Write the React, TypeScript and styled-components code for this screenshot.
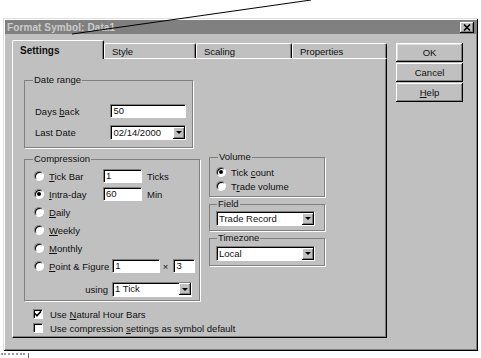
import styled, { createGlobalStyle } from "styled-components";

const GlobalStyle = createGlobalStyle`
  html, body {
    margin: 0;
    padding: 0;
    background: #fff;
  }
  body {
    font-family: "Liberation Sans", Arial, sans-serif;
    font-size: 9.5px;
    color: #111;
  }
  * {
    box-sizing: border-box;
  }
`;

const Page = styled.div`
  position: relative;
  width: 481px;
  height: 358px;
  padding: 18px 0 0 3px;
  overflow: hidden;
`;

const Scribble = styled.svg`
  position: absolute;
  left: 0;
  top: 0;
  pointer-events: none;
`;

const Window = styled.div`
  width: 475px;
  height: 333px;
  padding: 2px;
  background: #c0c0c0;
  box-shadow: inset 1px 1px #dfdfdf, inset -1px -1px #000, inset 2px 2px #fff,
    inset -2px -2px #808080;
  display: flex;
  flex-direction: column;
`;

const TitleBar = styled.div`
  height: 14px;
  background: #808080;
  display: flex;
  align-items: center;
  justify-content: space-between;
  padding: 0 2px 0 2px;
`;

const Title = styled.span`
  font-size: 10px;
  font-weight: bold;
  color: #cbcbcb;
  letter-spacing: 0.1px;
`;

const CloseButton = styled.div`
  width: 14px;
  height: 11px;
  background: #c0c0c0;
  box-shadow: inset -1px -1px #000, inset 1px 1px #fff, inset -2px -2px #808080;
  display: flex;
  align-items: center;
  justify-content: center;
`;

const Body = styled.div`
  display: flex;
  padding: 6px 0 0 7px;
`;

const TabArea = styled.div`
  width: 375px;
  display: flex;
  flex-direction: column;
`;

const TabStrip = styled.div`
  display: flex;
  align-items: flex-end;
  height: 18px;
`;

const Tab = styled.div<{ $w: number; $active?: boolean }>`
  position: relative;
  z-index: ${(p) => (p.$active ? 1 : 0)};
  width: ${(p) => p.$w}px;
  height: ${(p) => (p.$active ? 19 : 15)}px;
  margin-bottom: ${(p) => (p.$active ? -1 : 0)}px;
  padding: 0 0 0 7px;
  display: flex;
  align-items: center;
  background: #c0c0c0;
  border-top: 1px solid #fff;
  border-left: 1px solid #fff;
  border-right: 1px solid #000;
  border-radius: 2px 2px 0 0;
  box-shadow: inset -1px 0 #808080;
  font-size: ${(p) => (p.$active ? 10 : 9.5)}px;
  font-weight: ${(p) => (p.$active ? "bold" : "normal")};
`;

const Panel = styled.div`
  height: 280px;
  border-top: 1px solid #fff;
  border-left: 1px solid #fff;
  border-right: 1px solid #000;
  border-bottom: 1px solid #000;
  box-shadow: inset -1px -1px #808080;
  padding: 15px 0 0 11px;
`;

const GroupsRow = styled.div`
  display: flex;
  align-items: flex-start;
`;

const Column = styled.div<{ $offset?: number; $gap?: number }>`
  display: flex;
  flex-direction: column;
  gap: ${(p) => p.$gap ?? 0}px;
  margin-top: ${(p) => p.$offset ?? 0}px;
  margin-left: ${(p) => (p.$offset ? 9 : 0)}px;
`;

const Group = styled.fieldset<{ $w: number; $pad: string }>`
  margin: 0;
  min-width: 0;
  width: ${(p) => p.$w}px;
  border: 1px solid #808080;
  box-shadow: 1px 1px 0 #fff;
  padding: ${(p) => p.$pad};
  display: flex;
  flex-direction: column;
`;

const Legend = styled.legend<{ $indent: number }>`
  margin-left: ${(p) => p.$indent}px;
  padding: 0 1px;
  line-height: 12px;
  font-size: 9.5px;
`;

const Row = styled.div<{ $h?: number; $gap?: number }>`
  display: flex;
  align-items: center;
  height: ${(p) => p.$h ?? 18}px;
  gap: ${(p) => p.$gap ?? 0}px;
`;

const FieldLabel = styled.span<{ $w?: number; $right?: boolean }>`
  width: ${(p) => (p.$w ? `${p.$w}px` : "auto")};
  text-align: ${(p) => (p.$right ? "right" : "left")};
  white-space: nowrap;
`;

const Edit = styled.div<{ $w: number; $h?: number }>`
  width: ${(p) => p.$w}px;
  height: ${(p) => p.$h ?? 14}px;
  background: #fff;
  border: 1px solid;
  border-color: #808080 #fff #fff #808080;
  box-shadow: inset 1px 1px #000;
  padding: 0 0 0 2px;
  display: flex;
  align-items: center;
  justify-content: space-between;
  font-size: 9.5px;
  line-height: 12px;
  white-space: nowrap;
`;

const DropButton = styled.div`
  width: 12px;
  height: 12px;
  background: #c0c0c0;
  box-shadow: inset -1px -1px #000, inset 1px 1px #fff, inset -2px -2px #808080;
  display: flex;
  align-items: center;
  justify-content: center;
`;

const Arrow = styled.span`
  width: 0;
  height: 0;
  border-left: 3px solid transparent;
  border-right: 3px solid transparent;
  border-top: 3px solid #000;
`;

const RadioDot = styled.span<{ $checked?: boolean }>`
  flex: none;
  width: 10px;
  height: 10px;
  border-radius: 50%;
  background: #fff;
  border: 1px solid;
  border-color: #808080 #fff #fff #808080;
  box-shadow: inset 1px 1px #000;
  display: flex;
  align-items: center;
  justify-content: center;
  &::after {
    content: "";
    width: 4px;
    height: 4px;
    border-radius: 50%;
    background: ${(p) => (p.$checked ? "#000" : "transparent")};
  }
`;

const CheckBox = styled.span`
  flex: none;
  width: 10px;
  height: 10px;
  background: #fff;
  border: 1px solid;
  border-color: #808080 #fff #fff #808080;
  box-shadow: inset 1px 1px #000;
  display: flex;
  align-items: center;
  justify-content: center;
`;

const Options = styled.div`
  display: flex;
  flex-direction: column;
  margin-top: 6px;
  padding-left: 9px;
`;

const ButtonColumn = styled.div`
  display: flex;
  flex-direction: column;
  gap: 1px;
  margin: 3px 0 0 9px;
`;

const Button = styled.div<{ $default?: boolean }>`
  width: 67px;
  height: 19px;
  display: flex;
  align-items: center;
  justify-content: center;
  background: #c0c0c0;
  box-shadow: ${(p) =>
    p.$default
      ? "inset -1px -1px #000, inset 1px 1px #fff, inset -2px -2px #808080, inset 2px 2px #dfdfdf"
      : "inset -1px -1px #000, inset 1px 1px #fff, inset -2px -2px #808080"};
  font-size: 9.5px;
`;

const Footer = styled.div`
  display: flex;
  align-items: flex-start;
  gap: 3px;
  padding: 2px 0 0 0;
  margin-left: -2px;
`;

const Dots = styled.span`
  width: 24px;
  border-top: 2px dotted #9a9a9a;
`;

const Tick = styled.span`
  width: 1px;
  height: 5px;
  background: #6a6a6a;
`;

const Combo = ({ w, value }: { w: number; value: string }) => (
  <Edit $w={w} $h={15}>
    <span>{value}</span>
    <DropButton>
      <Arrow />
    </DropButton>
  </Edit>
);

const Radio = ({
  checked,
  children,
  w,
}: {
  checked?: boolean;
  children: React.ReactNode;
  w?: number;
}) => (
  <Row $h={18} $gap={5}>
    <RadioDot $checked={checked} />
    <FieldLabel $w={w}>{children}</FieldLabel>
  </Row>
);

export default function App() {
  return (
    <>
      <GlobalStyle />
      <Page>
        <Scribble width="481" height="40">
          <line x1="72" y1="34" x2="311" y2="0" stroke="#000" strokeWidth="1" />
        </Scribble>
        <Window>
          <TitleBar>
            <Title>Format Symbol: Data1</Title>
            <CloseButton>
              <svg width="8" height="7" viewBox="0 0 8 7">
                <path d="M1 0.5 L7 6.5 M7 0.5 L1 6.5" stroke="#000" strokeWidth="1.6" />
              </svg>
            </CloseButton>
          </TitleBar>
          <Body>
            <TabArea>
              <TabStrip>
                <Tab $w={92} $active>
                  Settings
                </Tab>
                <Tab $w={92}>Style</Tab>
                <Tab $w={96}>Scaling</Tab>
                <Tab $w={95}>Properties</Tab>
              </TabStrip>
              <Panel>
                <GroupsRow>
                  <Column $gap={5}>
                    <Group $w={169} $pad="18px 6px 7px 10px">
                      <Legend $indent={-2}>Date range</Legend>
                      <Row $h={14}>
                        <FieldLabel $w={78}>
                          Days <u>b</u>ack
                        </FieldLabel>
                        <Edit $w={78}>50</Edit>
                      </Row>
                      <Row $h={15} style={{ marginTop: 7 }}>
                        <FieldLabel $w={78}>Last Date</FieldLabel>
                        <Combo w={78} value="02/14/2000" />
                      </Row>
                    </Group>
                    <Group $w={176} $pad="2px 4px 3px 9px">
                      <Legend $indent={-1}>Compression</Legend>
                      <Row>
                        <Radio w={54}>
                          <u>T</u>ick Bar
                        </Radio>
                        <Edit $w={39}>1</Edit>
                        <FieldLabel style={{ marginLeft: 5 }}>Ticks</FieldLabel>
                      </Row>
                      <Row>
                        <Radio checked w={54}>
                          <u>I</u>ntra-day
                        </Radio>
                        <Edit $w={39}>60</Edit>
                        <FieldLabel style={{ marginLeft: 5 }}>Min</FieldLabel>
                      </Row>
                      <Radio>
                        <u>D</u>aily
                      </Radio>
                      <Radio>
                        <u>W</u>eekly
                      </Radio>
                      <Radio>
                        <u>M</u>onthly
                      </Radio>
                      <Row $gap={3}>
                        <Radio>
                          <u>P</u>oint &amp; Figure
                        </Radio>
                        <Edit $w={51}>1</Edit>
                        <FieldLabel style={{ margin: "0 2px 0 0" }}>×</FieldLabel>
                        <Edit $w={23}>3</Edit>
                      </Row>
                      <Row $h={16} $gap={4} style={{ marginTop: 6 }}>
                        <FieldLabel $w={74} $right>
                          using
                        </FieldLabel>
                        <Combo w={80} value="1 Tick" />
                      </Row>
                    </Group>
                  </Column>
                  <Column $offset={77}>
                    <Group $w={116} $pad="2px 4px 3px 6px">
                      <Legend $indent={2}>Volume</Legend>
                      <Row $h={14} $gap={5}>
                        <RadioDot $checked />
                        <FieldLabel>
                          Tick <u>c</u>ount
                        </FieldLabel>
                      </Row>
                      <Row $h={14} $gap={5}>
                        <RadioDot />
                        <FieldLabel>
                          T<u>r</u>ade volume
                        </FieldLabel>
                      </Row>
                    </Group>
                    <Group $w={116} $pad="1px 4px 4px 6px" style={{ marginTop: 1 }}>
                      <Legend $indent={1}>Field</Legend>
                      <Combo w={99} value="Trade Record" />
                    </Group>
                    <Group $w={116} $pad="2px 4px 4px 6px" style={{ marginTop: 1 }}>
                      <Legend $indent={1}>Timezone</Legend>
                      <Combo w={99} value="Local" />
                    </Group>
                  </Column>
                </GroupsRow>
                <Options>
                  <Row $h={14} $gap={7}>
                    <CheckBox>
                      <svg width="8" height="8" viewBox="0 0 8 8">
                        <path d="M1 3.5 L3 5.8 L7 1.2" stroke="#000" strokeWidth="1.6" fill="none" />
                      </svg>
                    </CheckBox>
                    <FieldLabel>
                      Use <u>N</u>atural Hour Bars
                    </FieldLabel>
                  </Row>
                  <Row $h={14} $gap={7}>
                    <CheckBox />
                    <FieldLabel>
                      Use compression <u>s</u>ettings as symbol default
                    </FieldLabel>
                  </Row>
                </Options>
              </Panel>
            </TabArea>
            <ButtonColumn>
              <Button $default>OK</Button>
              <Button>Cancel</Button>
              <Button>
                <span>
                  <u>H</u>elp
                </span>
              </Button>
            </ButtonColumn>
          </Body>
        </Window>
        <Footer>
          <Dots />
          <Tick />
        </Footer>
      </Page>
    </>
  );
}
